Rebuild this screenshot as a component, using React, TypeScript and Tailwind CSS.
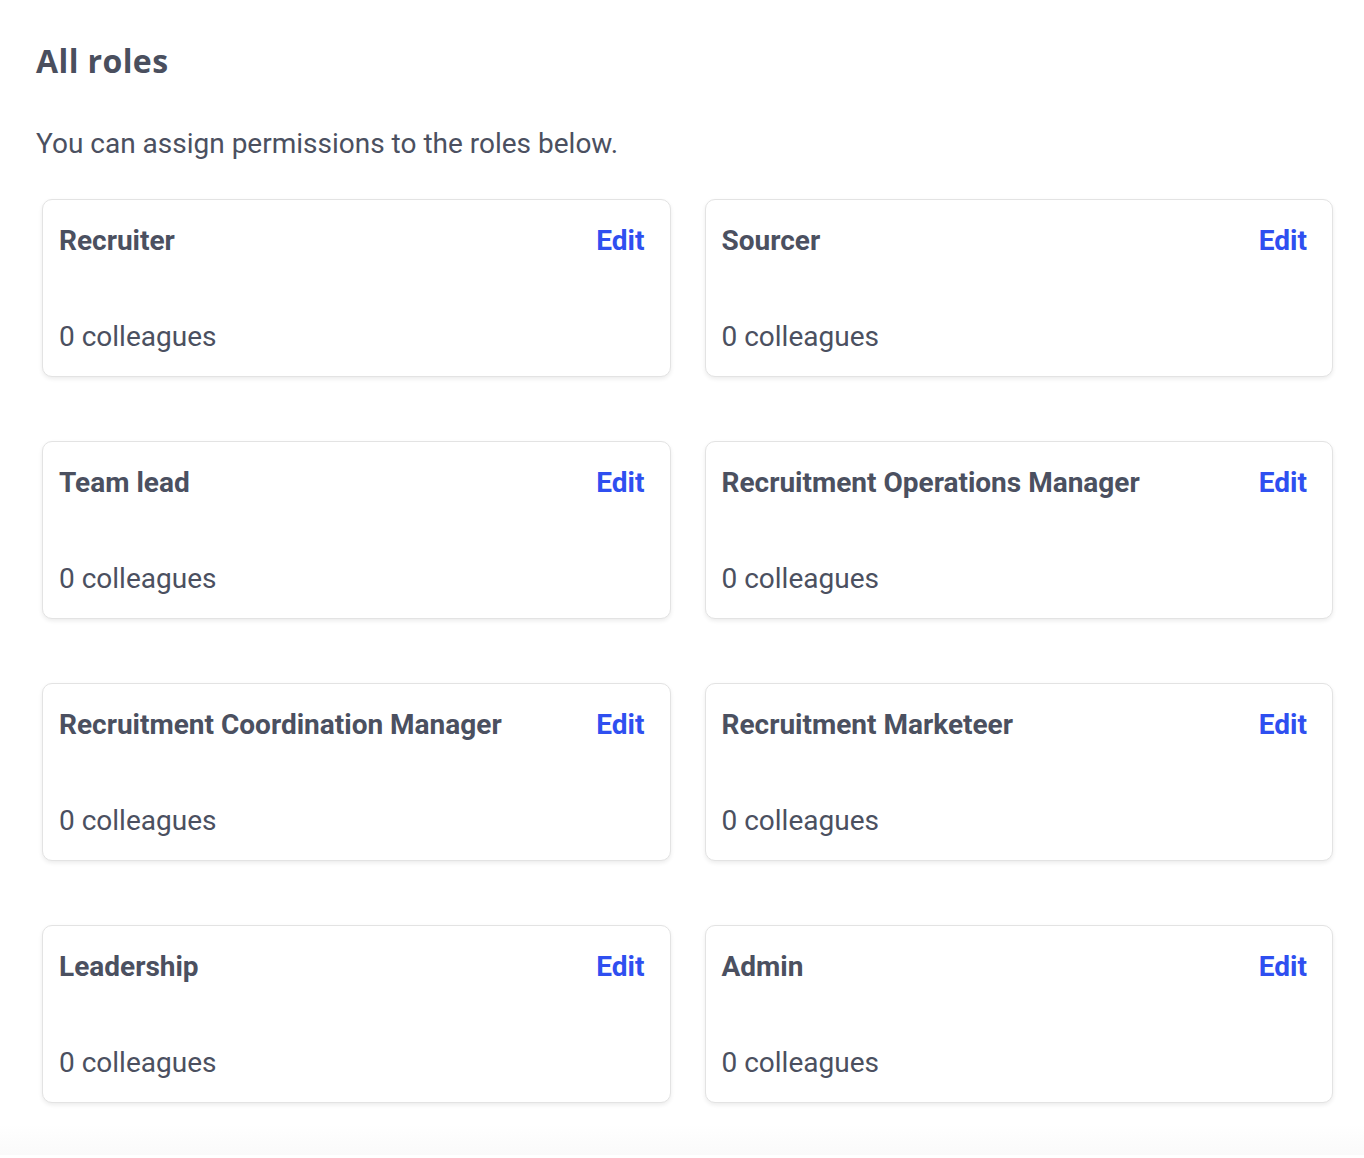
import React from "react";

const roles = [
  "Recruiter",
  "Sourcer",
  "Team lead",
  "Recruitment Operations Manager",
  "Recruitment Coordination Manager",
  "Recruitment Marketeer",
  "Leadership",
  "Admin",
];

export default function App() {
  return (
    <div className="min-h-[1158px] bg-white" style={{ fontFamily: "Roboto, 'Liberation Sans', sans-serif" }}>
      <div className="bg-white pl-[36px] pr-[30px] pt-[40px] pb-[22px]">
        <h1
          className="text-[32px] leading-[42px] font-bold text-[#4a4f5e] tracking-[0.4px]"
          style={{ fontFamily: "'Open Sans', 'Liberation Sans', sans-serif" }}
        >
          All roles
        </h1>
        <p className="mt-[45px] text-[28px] leading-[34px] text-[#4b5060]">
          You can assign permissions to the roles below.
        </p>
        <div className="mt-[38px] ml-[6px] grid grid-cols-2 gap-x-[34px] gap-y-[64px] w-[1291px]">
          {roles.map((r) => (
            <div
              key={r}
              className="h-[178px] rounded-[10px] border border-[#e3e3e3] bg-white shadow-[0_2px_4px_rgba(0,0,0,0.08)] pl-[16px] pr-[25px] pt-[24px] pb-[22px] flex flex-col justify-between"
            >
              <div className="flex items-center justify-between">
                <span className="text-[28px] leading-[34px] font-bold text-[#4b5060]">{r}</span>
                <span className="text-[28px] leading-[34px] font-bold text-[#2f4ff0]">Edit</span>
              </div>
              <div className="text-[28px] leading-[34px] text-[#4b5060]">0 colleagues</div>
            </div>
          ))}
        </div>
      </div>
      <div className="h-[30px] bg-gradient-to-b from-white to-[#fafafa]"></div>
    </div>
  );
}
